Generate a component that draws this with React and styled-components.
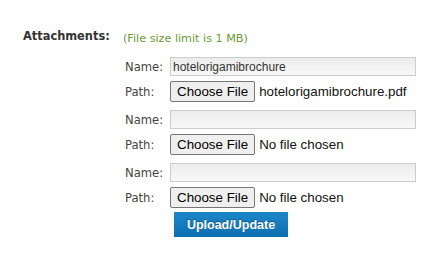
import React from "react";
import styled, { createGlobalStyle } from "styled-components";

const GlobalStyle = createGlobalStyle`
  body {
    margin: 0;
    background: #ffffff;
    font-family: "DejaVu Sans", Verdana, sans-serif;
  }
`;

const attachments = [
  { name: "hotelorigamibrochure", file: "hotelorigamibrochure.pdf" },
  { name: "", file: "" },
  { name: "", file: "" },
];

const App = () => {
  return (
    <>
      <GlobalStyle />
      <Form>
        <SectionLabel>Attachments:</SectionLabel>
        <Note>(File size limit is 1 MB)</Note>
        <Fields>
          {attachments.map((a, i) => (
            <Group key={i}>
              <FieldLabel>Name:</FieldLabel>
              <NameInput value={a.name} readOnly />
              <FieldLabel>Path:</FieldLabel>
              <FilePicker>
                <ChooseButton type="button">Choose File</ChooseButton>
                <FileName>{a.file || "No file chosen"}</FileName>
              </FilePicker>
            </Group>
          ))}
          <UploadButton type="button">Upload/Update</UploadButton>
        </Fields>
      </Form>
    </>
  );
};

const Form = styled.div`
  display: grid;
  grid-template-columns: 100px 1fr;
  padding: 29px 0 0 23px;
  color: #333333;
`;

const SectionLabel = styled.div`
  font-size: 11.4px;
  font-weight: bold;
  line-height: 14px;
  color: #333333;
`;

const Note = styled.div`
  font-size: 11.2px;
  line-height: 14px;
  padding-top: 3px;
  color: #6b9a37;
`;

const Fields = styled.div`
  grid-column: 2;
  display: flex;
  flex-direction: column;
  gap: 8px;
  padding: 11px 0 0 2px;
`;

const Group = styled.div`
  display: grid;
  grid-template-columns: 45px 246px;
  grid-auto-rows: auto;
  row-gap: 5px;
  align-items: center;
`;

const FieldLabel = styled.span`
  font-size: 11.6px;
  color: #444444;
`;

const NameInput = styled.input`
  box-sizing: border-box;
  width: 246px;
  height: 19px;
  margin: 0;
  padding: 0 2px;
  border: 1px solid #cccccc;
  background: linear-gradient(#ececec, #f8f8f8);
  font-family: "Liberation Sans", Arial, sans-serif;
  font-size: 12px;
  color: #333333;
  outline: none;
`;

const FilePicker = styled.div`
  display: flex;
  align-items: center;
  gap: 4px;
  white-space: nowrap;
`;

const ChooseButton = styled.button`
  box-sizing: border-box;
  height: 21px;
  margin: 0;
  padding: 0 6px;
  border: 1px solid #767676;
  border-radius: 2px;
  background: #efefef;
  font-family: "Liberation Sans", Arial, sans-serif;
  font-size: 13.33px;
  color: #000000;
`;

const FileName = styled.span`
  font-family: "Liberation Sans", Arial, sans-serif;
  font-size: 13.33px;
  color: #111111;
`;

const UploadButton = styled.button`
  align-self: flex-start;
  box-sizing: border-box;
  width: 114px;
  height: 25px;
  margin: -4px 0 0 49px;
  padding: 0;
  border: none;
  background: linear-gradient(#1e87c9, #0c6eb0);
  font-family: "Liberation Sans", Arial, sans-serif;
  font-size: 12.5px;
  font-weight: bold;
  color: #ffffff;
  text-shadow: 0 -1px 0 rgba(0, 0, 0, 0.35);
`;

export default App;
